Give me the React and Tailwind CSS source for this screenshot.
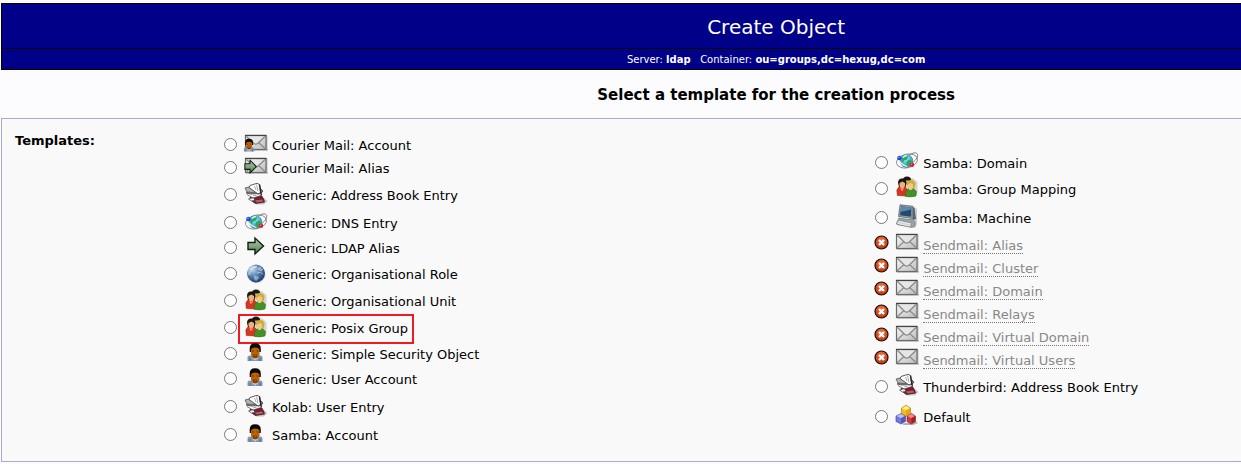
import React, { useState } from 'react'

const Envelope = () => (
  <>
    <rect x="2" y="17" width="22" height="2" fill="#999" opacity=".45" />
    <rect x="22" y="4" width="1.500" height="14" fill="#888" opacity=".5" />
    <rect x="1.500" y="3.500" width="20.500" height="14" fill="url(#paper)" stroke="#6b6b6b" strokeWidth="1.200" />
    <path d="M1 3.500h21.500" stroke="#444" strokeWidth="1.300" />
    <path d="M2 17l7-6.500M21.500 17l-7-6.500" stroke="#8c8c8c" strokeWidth="1.200" fill="none" />
    <path d="M2.500 4.500l7.200 7q2 1.200 4 0l7.300-7" fill="#e6e6e6" stroke="#8a8a8a" strokeWidth="1.400" />
  </>
)

const Arrow = () => (
  <path d="M.5 8.500h7V4l8.500 8-8.500 8v-4.500h-7z" fill="url(#leaf)" stroke="#141d14" strokeWidth="1.400" />
)

const Person = () => (
  <>
    <path d="M0 18v-3.500q0-2 3-2h9.500q2.500 0 2.500 2V18z" fill="#7f97b5" />
    <path d="M2.500 15v3M12.500 15v3" stroke="#52698a" />
    <path d="M5 12h5.500v3.500L7.700 17.500 5 15.500z" fill="#c3ccd8" />
    <path d="M2.200 6Q2 .3 7.700 .3T13.300 6v3H2.200z" fill="#0d0906" />
    <path d="M3.500 6.500Q4.500 4.500 7.700 4.500t4.300 2v5q-1 4-4.300 4t-4.200-4z" fill="#b8640c" />
    <path d="M4.500 8h2M9 8h2" stroke="#6b3605" />
    <path d="M5.700 11.500h4v3h-4z" fill="#6b3506" />
    <path d="M6.500 12.700h2.500" stroke="#b5681c" />
  </>
)

const drawings = {
  mail: <Envelope />,
  mailUser: (
    <>
      <Envelope />
      <g transform="translate(-.5 6.500) scale(.72 .72)">
        <Person />
      </g>
    </>
  ),
  mailArrow: (
    <>
      <Envelope />
      <g transform="translate(.5 2) scale(.74 .8)">
        <Arrow />
      </g>
    </>
  ),
  arrow: (
    <g transform="translate(3.500 -1)">
      <Arrow />
    </g>
  ),
  user: (
    <g transform="translate(3.500 2)">
      <Person />
    </g>
  ),
  book: (
    <>
      <path d="M10 20l10-4 3.500 3-3.500 3.500h-8z" fill="#666" opacity=".35" />
      <path d="M6 15l11-2.500 2.500 4.500 1 3-9 1.500-3-2z" fill="#7c1c2c" stroke="#2d0c12" strokeWidth=".7" />
      <path d="M11 18.500l7-1 1.500 2-7 1z" fill="#b0606c" />
      <path d="M4.500 17l5-1.500 1.500 3-3.500.5z" fill="#f4f4f4" stroke="#333" strokeWidth=".7" />
      <path d="M2 11l5 1 10-.5 2-2.500-2-2-8 1z" fill="#8d8d8d" stroke="#333" strokeWidth=".7" />
      <path d="M4.500 13.500l5 1.500 8-2.500" stroke="#fff" strokeWidth="1.600" fill="none" />
      <path d="M3 12.500l6 3.500 8-2.500" stroke="#444" strokeWidth=".7" fill="none" />
      <path d="M1 6l4-1 8.500 3.500-2.500 2.200-8-.7z" fill="#b3b3b3" stroke="#555" strokeWidth=".8" />
      <path d="M5 5.500L6 3.500l7-2.200 2.500 1.200 1 8-2.500 1.500z" fill="#fff" stroke="#333" strokeWidth=".8" />
      <path d="M10.500 4l1.500 4M12.500 2.500l1.500 7" stroke="#aaa" />
      <path d="M15.500 2.500l1.800 10.500" stroke="#222" strokeWidth="1.400" />
    </>
  ),
  network: (
    <>
      <ellipse cx="12" cy="12" rx="10.700" ry="6.800" transform="rotate(-14 12 12)" fill="#fff" fillOpacity=".7" stroke="#888" strokeWidth=".9" />
      <circle cx="11.500" cy="12" r="6.300" fill="url(#sea)" stroke="#2f7c95" strokeWidth=".7" />
      <path d="M8 7.500q3-2 5 0l-1 3-3 1-1 2.500-2-2zM12 12l4-1.500.8 3L13 17.500l-2-1z" fill="#2ba564" />
      <path d="M8 8.500q1.500-2 4-2" stroke="#c7f5ff" strokeWidth="1.400" fill="none" />
      <path d="M14 6q6-3.500 8-1.500t-1.500 6.500q-3.500 4-8 6.500" stroke="#777" strokeWidth=".9" fill="none" />
      <path d="M3.500 10.500q1.500 5 9 7" stroke="#eee" strokeWidth="1.200" fill="none" />
      <circle cx="4.500" cy="9" r="2.300" fill="#1749d9" />
      <circle cx="4" cy="8.200" r=".8" fill="#8db3ff" />
      <circle cx="17" cy="15.800" r="2.200" fill="#d12626" />
      <circle cx="16.500" cy="15.100" r=".7" fill="#ffa79d" />
    </>
  ),
  globe: (
    <>
      <circle cx="12.500" cy="13.500" r="9" fill="#bbb" opacity=".4" />
      <circle cx="12" cy="12.500" r="9" fill="url(#world)" />
      <path d="M4 9.500q1-4 5-5l4 .5-1 2-3 .5 1 2-3 2-1 3-2-1zM13 7.500l3-2 3 3-1 2-3-1zM10 14.500l4 1 1 1.500-3 3-2-2z" fill="#cddbea" opacity=".55" />
      <path d="M6 9q3-3.500 7-3" stroke="#eef5fb" strokeWidth="1.500" opacity=".6" fill="none" />
      <path d="M13 12q4-2 6 1" stroke="#a9bfd6" fill="none" />
    </>
  ),
  group: (
    <>
      <path d="M6 21l13 1 3.500-4V7l-5-4H7z" fill="#777" opacity=".28" />
      <path d="M8 5q0-3.500 4-3.500T16 5l-1 4H9z" fill="#191919" />
      <path d="M10.500 5.500h4v4h-4z" fill="#dcae7b" />
      <path d="M2.300 20.500L1.800 15l2-3H10l3 3-.5 6z" fill="#d8341f" stroke="#8a1d12" strokeWidth=".5" />
      <path d="M3 8Q3 3.500 7 3.500T11.500 8l-1 4H4z" fill="#1e130d" />
      <path d="M4.500 8l3-1.500L10 8v3L8.200 13.500H6L4.500 11z" fill="#ecb27a" />
      <path d="M10.500 21.500V17l3-3.500h5l3 3-.5 4.500q-5 1.500-10.500.5z" fill="#439127" stroke="#2a6a17" strokeWidth=".5" />
      <path d="M12 9q.5-4 4.200-4T20.500 9l-1 4.500h-6z" fill="#cfae35" />
      <path d="M13 9.500l3-1.500 2 1.500v3L16.500 15H14.500L13 12.500z" fill="#f3c88a" />
      <path d="M6 13.500l1 2 1.500-2" stroke="#f5b39d" fill="none" />
    </>
  ),
  machine: (
    <>
      <path d="M12 21l8 3 2-4V5l-3-2z" fill="#777" opacity=".35" />
      <path d="M4 14l14 2 2 2v4l-3 1.500-15-3V18z" fill="#9ba6a6" stroke="#66706f" strokeWidth=".6" />
      <path d="M1.500 18.500L4 16l13 3-1.500 4-14-3z" fill="#c9d0cf" stroke="#717c7b" strokeWidth=".6" />
      <path d="M17.500 2.500l2 1.500L21 15l-3 1z" fill="#586970" />
      <path d="M5 .8l12.800 1.400L18 14.500 3.500 12.500z" fill="#93a5ad" stroke="#4d5b62" strokeWidth=".7" />
      <path d="M6.200 2.300l10.200 1.200-.2 9.300L5 11.200z" fill="#234a6e" />
      <path d="M6.200 2.300l10.200 1.200v2L5.500 8z" fill="#5f87a8" />
      <path d="M4 17.700l11 2.300M3 19.500l11.500 2.500" stroke="#f0f3f3" strokeWidth=".8" />
    </>
  ),
  cubes: (
    <>
      <path d="M8 20.500l13-2 2 1.500-5 2H8z" fill="#555" opacity=".45" />
      <path d="M1 13l5-2.500 4.500 2.500v5.500L6 21l-5-2.500z" fill="#7479dc" stroke="#383c87" strokeWidth=".6" />
      <path d="M1.500 13L6 11l4 2-4 2.300z" fill="#b8bcff" />
      <path d="M6 15.300V20.500l4-2.300V13z" fill="#5358bf" />
      <path d="M12 13l4.500-2.500L20.500 13v5.500l-4 2.500-4.500-2.500z" fill="#d23c40" stroke="#821a1e" strokeWidth=".6" />
      <path d="M12.500 13l4-2 3.500 2-3.500 2.300z" fill="#ee8c8c" />
      <path d="M16.500 15.300V20.500l3.500-2.300V13z" fill="#a51c23" />
      <path d="M6.500 5L11 2.200 15.500 5v5.500L11 13 6.500 10.500z" fill="#f6bd16" stroke="#a56f0a" strokeWidth=".6" />
      <path d="M7 5.200L11 2.800l4 2.400-4 2.300z" fill="#ffec8d" />
      <path d="M11 7.500v5l4-2.200V5.300z" fill="#e8a50c" />
    </>
  ),
}

// row height follows the icon it carries
const rowHeights = {
  mail: 'h-[23px]',
  mailUser: 'h-[23px]',
  mailArrow: 'h-[23px]',
  arrow: 'h-[25px]',
  user: 'h-[25px]',
  network: 'h-[25px]',
  globe: 'h-[27px]',
  group: 'h-[27px]',
  cubes: 'h-[29px]',
  book: 'h-[31px]',
  machine: 'h-[31px]',
}

const left = [
  { icon: 'mailUser', title: 'Courier Mail: Account' },
  { icon: 'mailArrow', title: 'Courier Mail: Alias' },
  { icon: 'book', title: 'Generic: Address Book Entry' },
  { icon: 'network', title: 'Generic: DNS Entry' },
  { icon: 'arrow', title: 'Generic: LDAP Alias' },
  { icon: 'globe', title: 'Generic: Organisational Role' },
  { icon: 'group', title: 'Generic: Organisational Unit' },
  { icon: 'group', title: 'Generic: Posix Group', marked: true },
  { icon: 'user', title: 'Generic: Simple Security Object' },
  { icon: 'user', title: 'Generic: User Account' },
  { icon: 'book', title: 'Kolab: User Entry' },
  { icon: 'user', title: 'Samba: Account' },
]

const right = [
  { icon: 'network', title: 'Samba: Domain' },
  { icon: 'group', title: 'Samba: Group Mapping' },
  { icon: 'machine', title: 'Samba: Machine' },
  { icon: 'mail', title: 'Sendmail: Alias', disabled: true },
  { icon: 'mail', title: 'Sendmail: Cluster', disabled: true },
  { icon: 'mail', title: 'Sendmail: Domain', disabled: true },
  { icon: 'mail', title: 'Sendmail: Relays', disabled: true },
  { icon: 'mail', title: 'Sendmail: Virtual Domain', disabled: true },
  { icon: 'mail', title: 'Sendmail: Virtual Users', disabled: true },
  { icon: 'book', title: 'Thunderbird: Address Book Entry' },
  { icon: 'cubes', title: 'Default' },
]

const Gradients = () => (
  <svg className="absolute size-0" aria-hidden="true">
    <defs>
      <linearGradient id="paper" x1="0" y1="0" x2="1" y2="1">
        <stop offset="0" stopColor="#fafafa" />
        <stop offset="1" stopColor="#bcbcbc" />
      </linearGradient>
      <linearGradient id="leaf" x1="0" y1="0" x2="0" y2="1">
        <stop offset="0" stopColor="#b5d3b0" />
        <stop offset="1" stopColor="#4d7b4b" />
      </linearGradient>
      <radialGradient id="sea" cx=".4" cy=".3" r=".7">
        <stop offset="0" stopColor="#9deefa" />
        <stop offset="1" stopColor="#2b93b8" />
      </radialGradient>
      <radialGradient id="world" cx=".35" cy=".3" r=".75">
        <stop offset="0" stopColor="#b4cde5" />
        <stop offset=".55" stopColor="#4b78a9" />
        <stop offset="1" stopColor="#1b3a68" />
      </radialGradient>
      <radialGradient id="stop" cx=".5" cy=".3" r=".7">
        <stop offset="0" stopColor="#ee7144" />
        <stop offset="1" stopColor="#c03409" />
      </radialGradient>
    </defs>
  </svg>
)

const StopIcon = () => (
  <svg className="-ml-px mb-[3px] size-[15px]" viewBox="0 0 15 15" aria-hidden="true">
    <circle cx="7.500" cy="7.500" r="6.500" fill="url(#stop)" stroke="#1c0b05" strokeWidth="1.200" />
    <path d="M5 5l5 5M10 5l-5 5" stroke="#fff" strokeWidth="2.400" />
  </svg>
)

const Template = ({ item, selected, onSelect }) => (
  <li className={`flex items-center ${rowHeights[item.icon]}`}>
    <span className="flex w-5 shrink-0">
      {item.disabled ? (
        <StopIcon />
      ) : (
        <input
          type="radio"
          id={item.title}
          name="template"
          className="size-[13px]"
          checked={selected === item.title}
          onChange={() => onSelect(item.title)}
        />
      )}
    </span>
    <label htmlFor={item.disabled ? undefined : item.title} className="relative mt-0.5 flex items-center gap-1">
      <svg className="mb-1 size-6 shrink-0" viewBox="0 0 24 24" aria-hidden="true">
        {drawings[item.icon]}
      </svg>
      <span
        className={item.disabled ? 'mt-px border-b border-dotted border-[#777] leading-[15px] text-[#888]' : 'mt-px'}
      >
        {item.title}
      </span>
      {item.marked && <span className="absolute -inset-x-1.5 -inset-y-px border-2 border-[#ed1c24]" />}
    </label>
  </li>
)

const App = () => {
  const [selected, setSelected] = useState('')
  return (
    <div className="min-h-screen overflow-hidden bg-[#fcfcfe] font-['Verdana','DejaVu_Sans',sans-serif] text-[13px] leading-4 text-black">
      <Gradients />
      <div className="w-[125%] pt-[3px] pl-px">
        <header className="border border-black bg-[#000088] text-center text-white">
          <h1 className="border-b border-black pt-[9px] pb-[7px] text-[20px] leading-7">Create Object</h1>
          <p className="pt-px text-[10px] leading-[19px]">
            Server: <b>ldap</b> &nbsp; Container: <b>ou=groups,dc=hexug,dc=com</b>
          </p>
        </header>
        <h2 className="pt-[13px] pb-[11px] text-center text-[15px] leading-6 font-bold">
          Select a template for the creation process
        </h2>
        <form className="flex items-center border border-[#aaaacc] bg-[#f9f9f9] py-[14px] pr-6 pl-[13px]">
          <h3 className="w-[209px] shrink-0 self-start font-bold">Templates:</h3>
          <ul className="flex-1">
            {left.map((item) => (
              <Template key={item.title} item={item} selected={selected} onSelect={setSelected} />
            ))}
          </ul>
          <ul className="flex-1">
            {right.map((item) => (
              <Template key={item.title} item={item} selected={selected} onSelect={setSelected} />
            ))}
          </ul>
        </form>
      </div>
    </div>
  )
}

export default App
